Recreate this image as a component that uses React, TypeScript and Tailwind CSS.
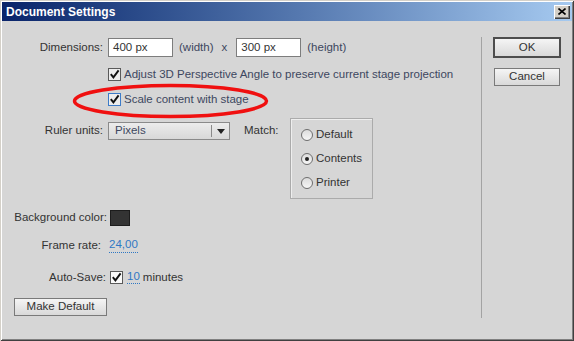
import React from "react";

function CheckBox({ focused = false, white = false }: { focused?: boolean; white?: boolean }) {
  return (
    <span
      className={`flex h-[13px] w-[13px] shrink-0 items-center justify-center border ${
        focused ? "border-[#3d7bc8]" : "border-[#5a5a5a]"
      } ${white ? "bg-[#fafafa]" : "bg-[#ededed]"}`}
    >
      <svg width="11" height="11" viewBox="0 0 11 11">
        <path d="M1.8 5.2 L4.4 8.4 L9.6 1.4" fill="none" stroke="#111" strokeWidth="1.9" />
      </svg>
    </span>
  );
}

function Radio({ label, checked = false }: { label: string; checked?: boolean }) {
  return (
    <div className="flex h-[12px] items-center gap-[3px]">
      <span className="flex h-[12px] w-[12px] items-center justify-center rounded-full border border-[#6e6e6e] bg-gradient-to-b from-[#dcdcdc] to-[#f6f6f6]">
        {checked && <span className="h-[4px] w-[4px] rounded-full bg-[#222]" />}
      </span>
      <span>{label}</span>
    </div>
  );
}

const btn =
  "flex items-center justify-center bg-gradient-to-b from-[#f5f5f5] to-[#d9d9d9] text-[#333]";

export default function App() {
  return (
    <div className="relative h-[341px] w-[574px] bg-[#d6d6d6] pb-[3px] pl-[2px] pr-[2px] pt-[2px] font-['Liberation_Sans',Arial,sans-serif] text-[11.5px] leading-none text-[#333] shadow-[inset_1px_1px_0_#d4d0c8,inset_-1px_-1px_0_#404040,inset_2px_2px_0_#ffffff,inset_-2px_-2px_0_#808080]">
      {/* Title bar */}
      <div className="flex h-[19px] items-center justify-between bg-gradient-to-r from-[#0a246a] to-[#a6caf0] pl-[4px] pr-[2px]">
        <span className="text-[12px] font-bold text-white">Document Settings</span>
        <span className="flex h-[14px] w-[16px] items-center justify-center bg-[#d4d0c8] shadow-[inset_1px_1px_0_#ffffff,inset_-1px_-1px_0_#404040,inset_-2px_-2px_0_#808080]">
          <svg width="8" height="7" viewBox="0 0 8 7">
            <path d="M0.5 0.5 L7.5 6.5 M7.5 0.5 L0.5 6.5" stroke="#000" strokeWidth="1.6" />
          </svg>
        </span>
      </div>

      <div className="flex">
        {/* Left panel */}
        <div className="flex w-[479px] flex-col">
          {/* Dimensions */}
          <div className="mt-[17px] flex h-[19px] items-center">
            <span className="w-[101px] text-right">Dimensions:</span>
            <span className="ml-[5px] flex h-[19px] w-[65px] items-center border border-[#7d7d7d] bg-white pl-[4px]">400 px</span>
            <span className="ml-[6px] text-[#3d4760]">(width)</span>
            <span className="ml-[8px] text-[#3d4760]">x</span>
            <span className="ml-[9px] flex h-[19px] w-[65px] items-center border border-[#7d7d7d] bg-white pl-[4px]">300 px</span>
            <span className="ml-[6px] text-[#3d4760]">(height)</span>
          </div>

          {/* Checkboxes */}
          <div className="ml-[106px] mt-[11px] flex h-[13px] items-center gap-[3px]">
            <CheckBox />
            <span className="text-[#3d4760]">Adjust 3D Perspective Angle to preserve current stage projection</span>
          </div>
          <div className="ml-[106px] mt-[12px] flex h-[13px] items-center gap-[3px]">
            <CheckBox focused />
            <span className="text-[#3d4760]">Scale content with stage</span>
          </div>

          {/* Ruler units / Match */}
          <div className="mt-[12px] flex items-start">
            <div className="mt-[4px] flex h-[18px] items-center">
              <span className="w-[101px] text-right">Ruler units:</span>
              <div className="ml-[5px] flex h-[18px] w-[122px] items-center border border-[#8a8a8a] bg-gradient-to-b from-[#ececec] to-[#d8d8d8]">
                <span className="flex-1 pl-[6px] text-[#3d4760]">Pixels</span>
                <span className="h-[12px] w-px bg-[#8a8a8a]" />
                <span className="flex w-[17px] justify-center">
                  <svg width="8" height="5" viewBox="0 0 8 5">
                    <path d="M0 0 H8 L4 5 Z" fill="#222" />
                  </svg>
                </span>
              </div>
              <span className="w-[60px] pl-[14px]">Match:</span>
            </div>
            <div className="flex h-[81px] w-[83px] flex-col gap-[12px] border border-[#ababab] pl-[10px] pt-[10px] shadow-[inset_1px_1px_0_#eeeeee]">
              <Radio label="Default" />
              <Radio label="Contents" checked />
              <Radio label="Printer" />
            </div>
          </div>

          {/* Background color */}
          <div className="mt-[11px] flex h-[16px] items-center">
            <span className="w-[105px] text-right">Background color:</span>
            <span className="ml-[3px] h-[16px] w-[20px] border border-[#1c1c1c] bg-[#333333]" />
          </div>

          {/* Frame rate */}
          <div className="mt-[13px] flex h-[14px] items-center">
            <span className="w-[99px] text-right">Frame rate:</span>
            <span className="ml-[8px] border-b border-dotted border-[#2f78c4] pb-[1px] text-[#2f78c4]">24,00</span>
          </div>

          {/* Auto-Save */}
          <div className="mt-[18px] flex h-[13px] items-center">
            <span className="w-[104px] text-right">Auto-Save:</span>
            <span className="ml-[4px]">
              <CheckBox white />
            </span>
            <span className="ml-[4px] border-b border-dotted border-[#2f78c4] pb-[1px] text-[#2f78c4]">10</span>
            <span className="ml-[3px]">minutes</span>
          </div>

          {/* Make Default */}
          <div className={`ml-[12px] mt-[14px] h-[18px] w-[93px] border border-[#7a7a7a] ${btn}`}>Make Default</div>
        </div>

        {/* Separator */}
        <div className="mt-[16px] h-[281px] w-px bg-[#a3a3a3]" />

        {/* Right panel */}
        <div className="flex flex-col pl-[11px]">
          <div className={`mt-[16px] h-[21px] w-[68px] border-2 border-[#4d4d4d] ${btn}`}>OK</div>
          <div className={`ml-px mt-[10px] h-[18px] w-[66px] border border-[#7a7a7a] ${btn}`}>Cancel</div>
        </div>
      </div>

      {/* Red annotation */}
      <svg className="pointer-events-none absolute left-0 top-0" width="574" height="341">
        <ellipse cx="170.5" cy="101" rx="96" ry="15.5" fill="none" stroke="#f01010" strokeWidth="3.5" />
      </svg>
    </div>
  );
}
